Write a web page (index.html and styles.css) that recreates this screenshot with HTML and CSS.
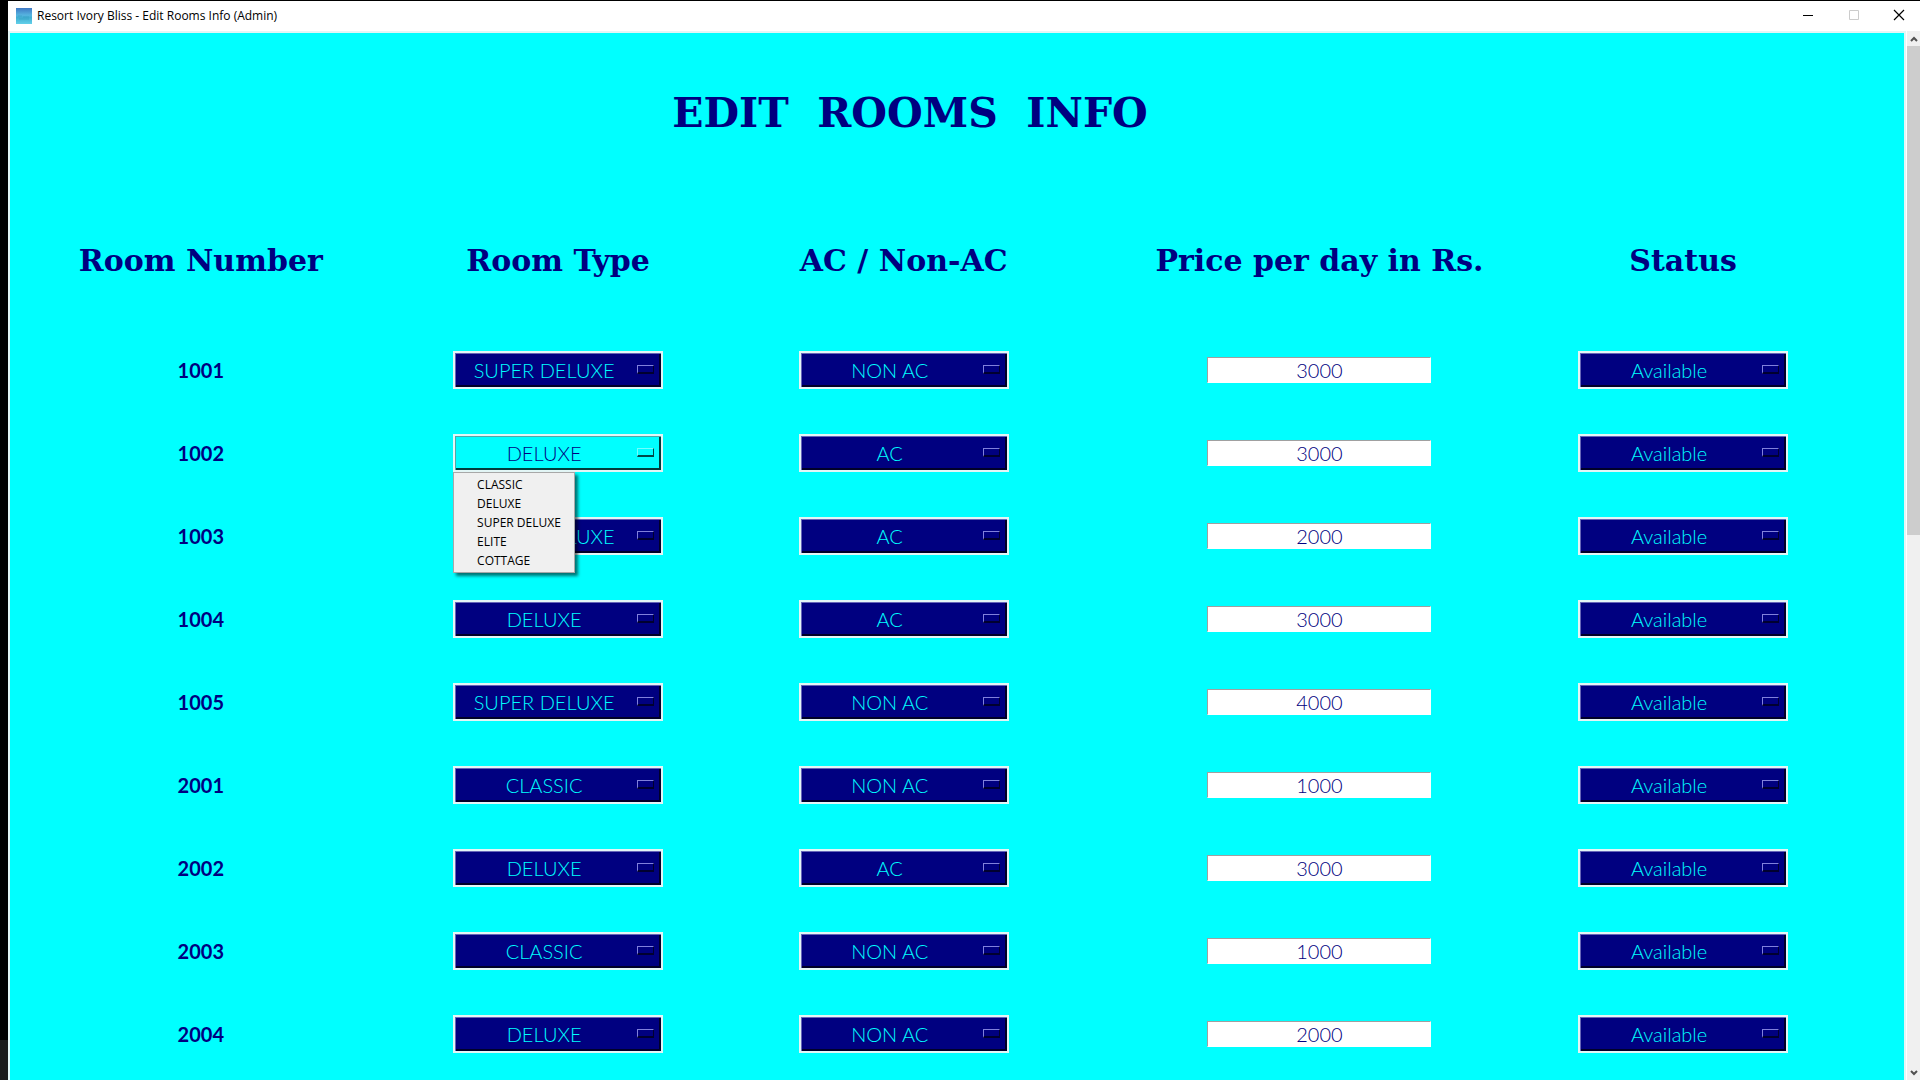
FILE: index.html
```html
<!DOCTYPE html>
<html lang="en">
<head>
<meta charset="utf-8">
<title>Resort Ivory Bliss - Edit Rooms Info (Admin)</title>
<link rel="stylesheet" href="styles.css">
</head>
<body>
<div class="window">
  <header class="titlebar">
    <svg class="app-icon" viewBox="0 0 16 16" aria-hidden="true">
      <defs><linearGradient id="sea" x1="0" y1="0" x2="0" y2="1"><stop offset="0" stop-color="#3f78c4"/><stop offset=".45" stop-color="#56b4e0"/><stop offset=".6" stop-color="#41afd2"/><stop offset="1" stop-color="#62d0ea"/></linearGradient></defs>
      <rect width="16" height="16" fill="url(#sea)"/>
      <path d="M2 8h4M7 9h6M3 11h10" stroke="#2d93b8" stroke-width="1" opacity=".4"/>
    </svg>
    <span class="caption">Resort Ivory Bliss - Edit Rooms Info (Admin)</span>
    <div class="controls">
      <button type="button" aria-label="Minimize"><svg viewBox="0 0 10 10"><path d="M0 5.5h10" stroke="#000"/></svg></button>
      <button type="button" aria-label="Maximize" disabled><svg viewBox="0 0 10 10"><path d="M.5 .5h9v9h-9z" stroke="#ccc" fill="none"/></svg></button>
      <button type="button" aria-label="Close"><svg viewBox="0 0 10 10"><path d="M0 0l10 10M10 0L0 10" stroke="#000" stroke-width="1.2"/></svg></button>
    </div>
  </header>
  <div class="body">
    <main class="canvas">
      <h1>EDIT  ROOMS  INFO</h1>
      <table class="rooms">
        <colgroup><col class="c-number"><col class="c-type"><col class="c-ac"><col class="c-price"><col class="c-status"></colgroup>
        <thead><tr><th scope="col">Room Number</th><th scope="col">Room Type</th><th scope="col">AC / Non-AC</th><th scope="col">Price per day in Rs.</th><th scope="col">Status</th></tr></thead>
        <tbody id="rows"></tbody>
      </table>
    </main>
    <div class="scrollbar" aria-hidden="true">
      <div class="arrow"><svg viewBox="0 0 8 6"><path d="M1 5l3-3 3 3" fill="none" stroke="#505050" stroke-width="2"/></svg></div>
      <div class="track"><div class="thumb"></div></div>
      <div class="arrow"><svg viewBox="0 0 8 6"><path d="M1 1l3 3 3-3" fill="none" stroke="#505050" stroke-width="2"/></svg></div>
    </div>
  </div>
</div>
<script src="rooms.js"></script>
</body>
</html>
```
FILE: styles.css
```css
* { box-sizing: border-box; }
html, body { height: 100%; }
body {
  margin: 0;
  padding: 1px 0 0 8px;
  overflow: hidden;
  background: linear-gradient(#000 0 1040px, #1a1a1a 1040px);
  font-family: "Open Sans", "Noto Sans", sans-serif;
}
.window { height: 100%; display: flex; flex-direction: column; background: #fff; }

.titlebar { flex: none; height: 30px; display: flex; align-items: center; padding-left: 8px; }
.app-icon { width: 16px; height: 16px; }
.caption { margin-left: 5px; font-size: 12px; line-height: 16px; color: #000; }
.controls { margin-left: auto; display: flex; }
.controls button {
  width: 46px; height: 30px; padding: 0 0 2px; border: 0; background: none;
  display: grid; place-items: center;
}
.controls button:last-child { width: 43px; }
.controls svg { width: 10px; height: 10px; overflow: visible; }

.body { flex: 1; min-height: 0; display: flex; }
.canvas {
  flex: 1; overflow: hidden; background: #0ff;
  border: solid #e3f6f6; border-width: 2px 2px 0;
  padding: 56px 94px 0 0;
  color: #000080;
}
h1 {
  margin: 0; text-align: center; white-space: pre;
  font: bold 41px/48px "DejaVu Serif", serif;
}
.rooms { width: 100%; table-layout: fixed; border-collapse: collapse; }
.c-number { width: 21.2%; }
.c-type { width: 18.5%; }
.c-ac { width: 19.9%; }
.c-price { width: 26.3%; }
.c-status { width: 14.1%; }
.rooms thead th {
  padding: 106px 0 49px; white-space: nowrap;
  font: bold 30px/36px "DejaVu Serif", serif;
}
.rooms tbody th, .rooms td { height: 83px; padding: 0; text-align: center; vertical-align: middle; }
.rooms tbody th { font: bold 20px/24px Lato, sans-serif; }

.option {
  position: relative;
  display: grid; width: 210px; height: 38px; margin: 0 auto;
  align-items: center;
}
.option select, .option::after { grid-area: 1 / 1; }
.option select {
  appearance: none;
  width: 100%; height: 38px; margin: 0; padding: 0 28px 0 0;
  border: 2px solid #e3f6f6; border-radius: 0; outline: 0;
  background: #000080; color: #0ff;
  box-shadow: inset 1px 1px #6666b8, inset -2px -2px #000028;
  font: 300 20px/24px Lato, sans-serif;
  text-align: center; text-align-last: center;
}
.option::after {
  content: ""; z-index: 1; pointer-events: none;
  justify-self: end; width: 15px; height: 6px; margin-right: 9px;
  border: solid; border-width: 1px 1px 2px;
  border-color: #8080dc #000030 #000030 #8080dc;
}
.option.active select { background: #0ff; color: #000080; box-shadow: inset 1px 1px #50a8a8, inset -2px -2px #003c3c; }
.option.active::after { border-color: #70ffff #004848 #004848 #70ffff; }
.option select option { background: #f0f0f0; color: #000; }

.price {
  display: block; width: 224px; height: 26px; margin: 0 auto; padding: 0;
  border: solid; border-width: 1px; border-color: #a0a0a0 #fff #fff #a0a0a0; border-radius: 0;
  background: #fff; color: #000080; text-align: center;
  font: 300 20px/24px Lato, sans-serif;
}

.menu {
  position: absolute; z-index: 2; top: 100%; left: 0;
  width: 122px; margin: 0; padding: 2px 0; list-style: none; text-align: left;
  background: #f0f0f0; border: 1px solid #a8a8a8;
  box-shadow: 3px 3px 3px rgba(0, 0, 0, .55);
  font-size: 12px; line-height: 19px; color: #000;
}
.menu button {
  display: block; width: 100%; height: 19px; padding: 0 0 0 23px;
  border: 0; background: none; font: inherit; color: inherit; text-align: left; white-space: nowrap;
}

.scrollbar { flex: none; width: 14px; display: flex; flex-direction: column; background: #f0f0f0; border-left: 1px solid #fff; }
.arrow { height: 15px; display: grid; place-items: center; }
.arrow svg { width: 8px; height: 6px; }
.track { flex: 1; }
.thumb { height: 48%; background: #cdcdcd; }
```
FILE: rooms.js
```js
const TYPES = ["CLASSIC", "DELUXE", "SUPER DELUXE", "ELITE", "COTTAGE"];
const ROOMS = [
  [1001, "SUPER DELUXE", "NON AC", 3000],
  [1002, "DELUXE", "AC", 3000],
  [1003, "SUPER DELUXE", "AC", 2000],
  [1004, "DELUXE", "AC", 3000],
  [1005, "SUPER DELUXE", "NON AC", 4000],
  [2001, "CLASSIC", "NON AC", 1000],
  [2002, "DELUXE", "AC", 3000],
  [2003, "CLASSIC", "NON AC", 1000],
  [2004, "DELUXE", "NON AC", 2000]
];
const OPEN_ROOM = 1002;

function picker(room, label, values, current, open) {
  const options = values.map(v => `<option${v === current ? " selected" : ""}>${v}</option>`).join("");
  const menu = open
    ? `<ul class="menu">${values.map(v => `<li><button type="button">${v}</button></li>`).join("")}</ul>`
    : "";
  return `<div class="option${open ? " active" : ""}"><select aria-label="${label} of room ${room}">${options}</select>${menu}</div>`;
}

document.getElementById("rows").innerHTML = ROOMS.map(([no, type, ac, price]) => `<tr>
  <th scope="row">${no}</th>
  <td>${picker(no, "Room type", TYPES, type, no === OPEN_ROOM)}</td>
  <td>${picker(no, "AC / Non-AC", ["AC", "NON AC"], ac)}</td>
  <td><input class="price" type="text" aria-label="Price per day of room ${no}" value="${price}"></td>
  <td>${picker(no, "Status", ["Available", "Booked"], "Available")}</td>
</tr>`).join("");
```
